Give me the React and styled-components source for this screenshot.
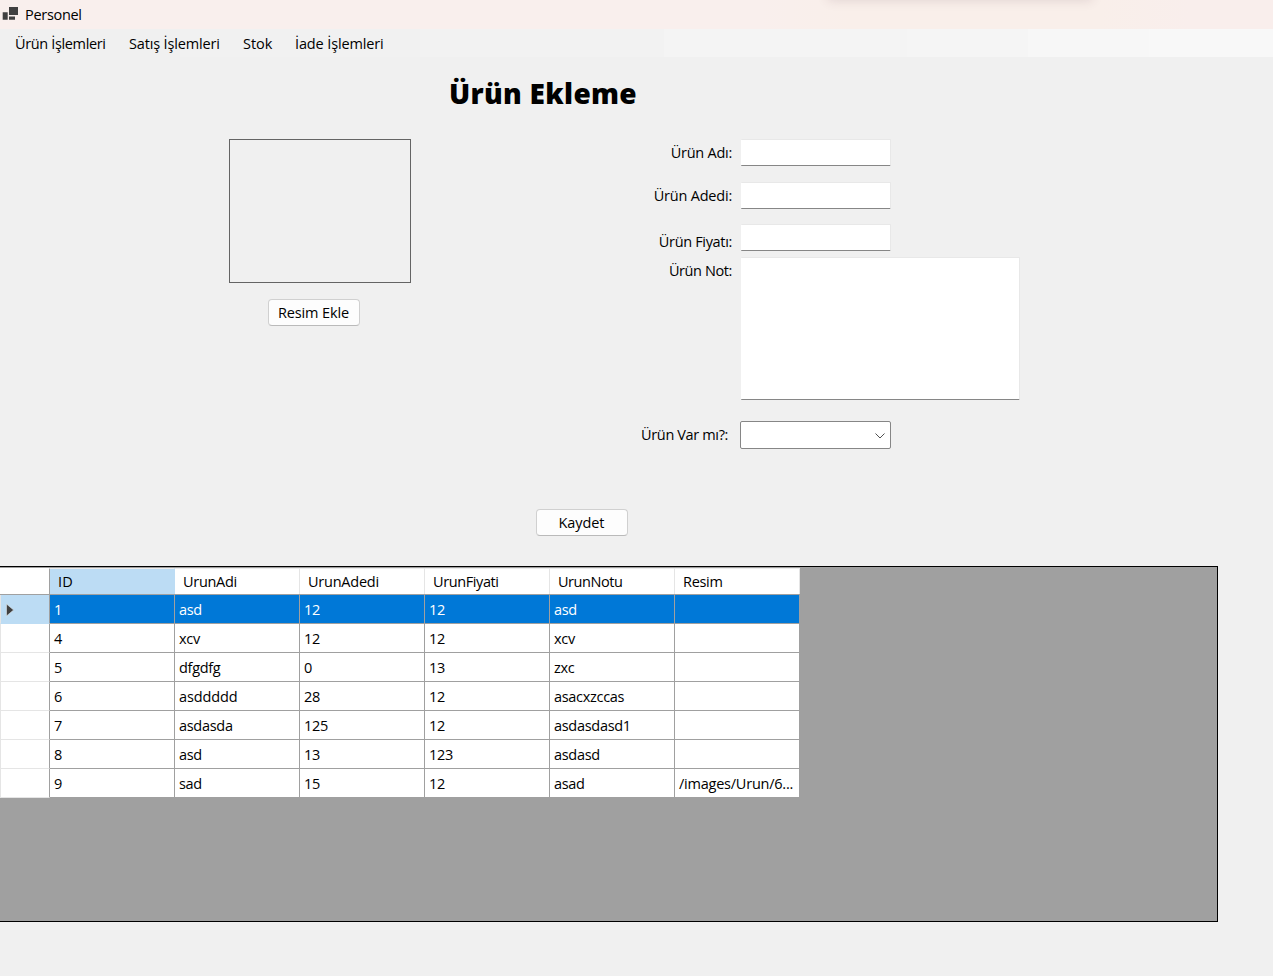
import React from "react";
import styled, { createGlobalStyle } from "styled-components";

const Global = createGlobalStyle`
  * { box-sizing: border-box; }
  body { margin: 0; background: #f0f0f0; overflow: hidden; }
`;

const Window = styled.div`
  width: 1273px;
  height: 976px;
  display: flex;
  flex-direction: column;
  background: #f0f0f0;
  color: #000;
  font: 14.5px/20px "Open Sans", "Noto Sans", sans-serif;
  overflow: hidden;
`;

const TitleBar = styled.header`
  position: relative;
  height: 29px;
  flex: none;
  display: flex;
  align-items: center;
  padding-left: 2px;
  gap: 7px;
  overflow: hidden;
  background: linear-gradient(90deg, #f9efed 0, #f9efed 760px, #f9efea 850px, #f9efea 1100px, #f9eeec 1190px);
`;

const TopShadow = styled.div`
  position: absolute;
  left: 830px;
  top: -12px;
  width: 260px;
  height: 10px;
  box-shadow: 0 0 12px 2px rgba(90, 50, 70, 0.16);
`;

const AppIcon = styled.svg`
  display: block;
  margin-top: -2px;
`;

const Text = styled.span`
  display: block;
  white-space: pre;
  letter-spacing: ${(p) => p.$ls ?? -0.3}px;
`;

const MenuBar = styled.nav`
  height: 28px;
  flex: none;
  display: flex;
  align-items: center;
  padding: 2px 0 0 15px;
  background: linear-gradient(90deg, #f0f0f0 0 180px, #f1f1f1 180px 420px, #f2f2f2 420px 664px, #f4f4f4 664px 907px, #f5f5f5 907px 1028px, #f7f7f7 1028px 1149px, #f8f8f8 1149px);
`;

const MenuItem = styled.div`
  width: ${(p) => p.$w}px;
`;

const Heading = styled.h1`
  margin: 17px 0 0 449px;
  height: 41px;
  font: 800 28px/38px "Open Sans", "Noto Sans", sans-serif;
  letter-spacing: 0.3px;
  white-space: nowrap;
`;

const Form = styled.main`
  display: flex;
  height: 334px;
  margin-top: 24px;
  flex: none;
`;

const PicturePanel = styled.section`
  width: 182px;
  margin-left: 229px;
  display: flex;
  flex-direction: column;
  gap: 16px;
`;

const Picture = styled.div`
  height: 144px;
  border: 1px solid #646464;
`;

const Button = styled.button`
  width: 92px;
  height: 27px;
  margin: 0 0 0 ${(p) => p.$left || 0}px;
  padding: 0 1px 0 0;
  border: 1px solid #d0d0d0;
  border-bottom-color: #bababa;
  border-radius: 4px;
  background: #fdfdfd;
  color: #000;
  font: inherit;
  display: flex;
  justify-content: center;
  align-items: center;
`;

const Fields = styled.section`
  width: 400px;
  margin-left: 209px;
`;

const FieldRow = styled.div`
  display: flex;
  height: ${(p) => p.$h}px;
`;

const Label = styled.label`
  width: ${(p) => p.$w || 112}px;
  margin-right: ${(p) => 120 - (p.$w || 112)}px;
  padding-top: ${(p) => p.$top}px;
  display: flex;
  justify-content: flex-end;
`;

const fieldFrame = `
  display: block;
  padding: 0 4px;
  margin: 0 0 0 1px;
  border: 1px solid #e8e8e8;
  border-left: 0;
  border-bottom-color: #868686;
  border-radius: 1px;
  background: #fff;
  outline: none;
  font: inherit;
`;

const Input = styled.input`
  ${fieldFrame}
  width: 150px;
  height: 27px;
`;

const TextArea = styled.textarea`
  ${fieldFrame}
  width: 279px;
  height: 143px;
  resize: none;
`;

const Combo = styled.div`
  width: 151px;
  height: 28px;
  border: 1px solid #868686;
  border-radius: 2px;
  background: #fff;
  display: flex;
  align-items: center;
  justify-content: flex-end;
  padding: 1px 4px 0 0;
`;

const SaveBar = styled.div`
  height: 93px;
  flex: none;
  padding-top: 36px;
`;

const GridFrame = styled.section`
  width: 1218px;
  height: 356px;
  flex: none;
  border: 1px solid #000;
  border-left: 0;
  background: #a0a0a0;
  padding-top: 1px;
`;

const HeaderRow = styled.div`
  display: grid;
  grid-template-columns: 50px repeat(6, 125px);
  height: 27px;
  width: 800px;
  border-bottom: 1px solid #a0a0a0;
`;

const HeaderCell = styled.div`
  padding: ${(p) => (p.$corner ? 0 : "3px 0 0 8px")};
  border-top: 1px solid ${(p) => (p.$corner ? "#fff" : "#ececec")};
  border-right: 1px solid ${(p) => (p.$corner ? "#a0a0a0" : p.$active ? "#bcdcf4" : "#e5e5e5")};
  background: ${(p) => (p.$active ? "#bcdcf4" : "#fff")};
`;

const Row = styled.div`
  display: grid;
  grid-template-columns: 50px repeat(5, 125px) 124px;
  width: 799px;
  height: 29px;
  color: ${(p) => (p.$selected ? "#fff" : "#000")};
`;

const RowHeader = styled.div`
  border: 0 solid #e5e5e5;
  border-width: 0 1px 1px;
  border-right-color: #a0a0a0;
  border-bottom-color: ${(p) => (p.$selected ? "#bcdcf4" : "#e5e5e5")};
  background: ${(p) => (p.$selected ? "#bcdcf4" : "#fff")};
  display: flex;
  align-items: center;
  padding: 2px 0 0 4px;
`;

const Cell = styled.div`
  border-right: ${(p) => (p.$last ? 0 : 1)}px solid #a0a0a0;
  border-bottom: 1px solid #a0a0a0;
  background: ${(p) => (p.$selected ? "#0078d7" : "#fff")};
  padding: 5px 0 0 4px;
  overflow: hidden;
`;

const menu = [
  ["Ürün İşlemleri", 114, -0.36],
  ["Satış İşlemleri", 114, -0.15],
  ["Stok", 52, -0.05],
  ["İade İşlemleri", 100, -0.13],
];
const columns = ["ID", "UrunAdi", "UrunAdedi", "UrunFiyati", "UrunNotu", "Resim"];
const spacing = { ID: 0.1, UrunAdedi: -0.24, UrunFiyati: -0.4, UrunNotu: -0.45, asddddd: -0.1, "/images/Urun/6...": -0.23 };
const rows = [
  ["1", "asd", "12", "12", "asd", ""],
  ["4", "xcv", "12", "12", "xcv", ""],
  ["5", "dfgdfg", "0", "13", "zxc", ""],
  ["6", "asddddd", "28", "12", "asacxzccas", ""],
  ["7", "asdasda", "125", "12", "asdasdasd1", ""],
  ["8", "asd", "13", "123", "asdasd", ""],
  ["9", "sad", "15", "12", "asad", "/images/Urun/6..."],
];

export default function App() {
  return (
    <>
      <Global />
      <Window>
        <TitleBar>
          <TopShadow />
          <AppIcon width="16" height="16" viewBox="0 0 16 16">
            <path d="M7 1h9v8H7z" fill="#404040" />
            <path d="M0.7 6.3h5v7.4h-5zM7 10.5h6v3.2H7z" fill="#404040" />
          </AppIcon>
          <Text>Personel</Text>
        </TitleBar>
        <MenuBar>
          {menu.map(([name, w, ls]) => (
            <MenuItem key={name} $w={w}><Text $ls={ls}>{name}</Text></MenuItem>
          ))}
        </MenuBar>
        <Heading>Ürün Ekleme</Heading>
        <Form>
          <PicturePanel>
            <Picture />
            <Button $left={39}><Text $ls={-0.12}>Resim Ekle</Text></Button>
          </PicturePanel>
          <Fields>
            <FieldRow $h={43}><Label $top={4}><Text $ls={-0.25}>Ürün Adı:</Text></Label><Input /></FieldRow>
            <FieldRow $h={42}><Label $top={4}><Text $ls={-0.2}>Ürün Adedi:</Text></Label><Input /></FieldRow>
            <FieldRow $h={33}><Label $top={8}><Text $ls={-0.33}>Ürün Fiyatı:</Text></Label><Input /></FieldRow>
            <FieldRow $h={164}><Label $top={4}><Text $ls={-0.4}>Ürün Not:</Text></Label><TextArea /></FieldRow>
            <FieldRow $h={28}>
              <Label $top={4} $w={108}><Text $ls={-0.36}>Ürün Var mı?:</Text></Label>
              <Combo>
                <svg width="12" height="8" viewBox="0 0 12 8">
                  <path d="M1.5 1.5 6 6l4.5-4.5" fill="none" stroke="#505050" />
                </svg>
              </Combo>
            </FieldRow>
          </Fields>
        </Form>
        <SaveBar>
          <Button $left={536}><Text $ls={-0.1}>Kaydet</Text></Button>
        </SaveBar>
        <GridFrame>
          <HeaderRow>
            <HeaderCell $corner />
            {columns.map((c, i) => (
              <HeaderCell key={c} $active={i === 0}><Text $ls={spacing[c]}>{c}</Text></HeaderCell>
            ))}
          </HeaderRow>
          {rows.map((r, n) => (
            <Row key={r[0]} $selected={n === 0}>
              <RowHeader $selected={n === 0}>
                {n === 0 && (
                  <svg width="10" height="14" viewBox="0 0 10 14">
                    <path d="M1.5 1v12L8.6 7z" fill="#404040" stroke="#dfe5ea" strokeWidth="0.6" />
                  </svg>
                )}
              </RowHeader>
              {r.map((v, i) => (
                <Cell key={i} $selected={n === 0} $last={i === 5}><Text $ls={spacing[v]}>{v}</Text></Cell>
              ))}
            </Row>
          ))}
        </GridFrame>
      </Window>
    </>
  );
}
